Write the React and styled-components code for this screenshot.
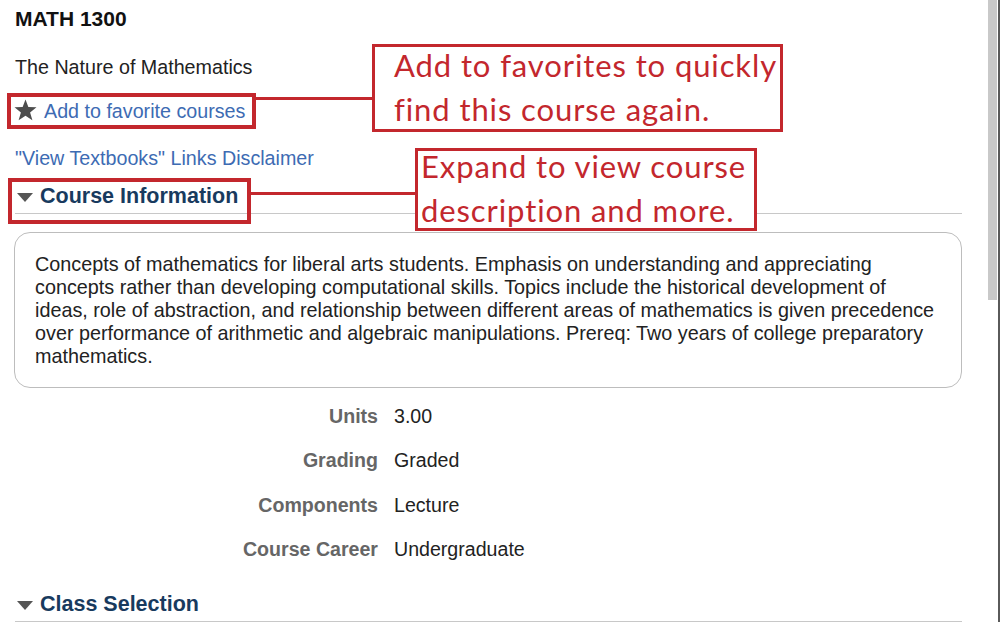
import React from 'react'
import styled, { createGlobalStyle } from 'styled-components';

const GlobalStyle = createGlobalStyle`
  html, body {
    margin: 0;
    padding: 0;
    background: #fff;
  }
  body {
    font-family: "Liberation Sans", Arial, sans-serif;
    color: #222;
  }
`

const RED = '#c3272d';

const fields = [
  { label: 'Units', value: '3.00' },
  { label: 'Grading', value: 'Graded' },
  { label: 'Components', value: 'Lecture' },
  { label: 'Course Career', value: 'Undergraduate' },
];

const Star = () => (
  <svg width="23" height="22" viewBox="0 0 24 23">
    <polygon
      points="12,0.5 15,8.4 23.5,8.7 16.8,14 19.2,22.3 12,17.5 4.8,22.3 7.2,14 0.5,8.7 9,8.4"
      fill="#4d4d4d"
    />
  </svg>
);

const Caret = () => (
  <svg width="16" height="9" viewBox="0 0 16 9">
    <polygon points="0,0 16,0 8,9" fill="#555" />
  </svg>
);

const App = () => {
  return (
    <>
      <GlobalStyle />
      <Screen>
        <Page>
          <Title>MATH 1300</Title>
          <Subtitle>The Nature of Mathematics</Subtitle>
          <FavLink href="#">
            <Star />
            <span>Add to favorite courses</span>
          </FavLink>
          <Link href="#">"View Textbooks" Links Disclaimer</Link>

          <SectionHeader $top={13}>
            <Caret />
            Course Information
          </SectionHeader>
          <Description>
            Concepts of mathematics for liberal arts students. Emphasis on understanding and appreciating<br />
            concepts rather than developing computational skills. Topics include the historical development of<br />
            ideas, role of abstraction, and relationship between different areas of mathematics is given precedence<br />
            over performance of arithmetic and algebraic manipulations. Prereq: Two years of college preparatory<br />
            mathematics.
          </Description>

          <Fields>
            {fields.map(f => (
              <React.Fragment key={f.label}>
                <Label>{f.label}</Label>
                <Value>{f.value}</Value>
              </React.Fragment>
            ))}
          </Fields>

          <SectionHeader $top={19}>
            <Caret />
            Class Selection
          </SectionHeader>

          {/* annotation markup drawn over the page */}
          <Highlight style={{ left: 7, top: 93, width: 249, height: 36 }} />
          <Connector style={{ left: 256, top: 97, width: 116 }} />
          <Callout $pad={19} $shift={-4} style={{ left: 372, top: 44, width: 411, height: 88 }}>
            <span>Add to favorites to quickly<br />find this course again.</span>
          </Callout>

          <Highlight style={{ left: 8, top: 178, width: 243, height: 46 }} />
          <Connector style={{ left: 251, top: 192, width: 164 }} />
          <Callout $pad={3} $shift={-7} style={{ left: 415, top: 148, width: 342, height: 83 }}>
            <span>Expand to view course<br />description and more.</span>
          </Callout>
        </Page>
        <Scrollbar>
          <Thumb />
        </Scrollbar>
      </Screen>
    </>
  );
}

const Screen = styled.div`
  display: flex;
  width: 1000px;
  height: 622px;
  overflow: hidden;
`

const Page = styled.main`
  position: relative;
  flex: 1;
  min-width: 0;
  padding: 7px 26px 0 15px;
`

const Scrollbar = styled.div`
  flex: 0 0 12px;
  border-right: 2px solid #5a5a5a;
  box-sizing: border-box;
  background: #fff;
`

const Thumb = styled.div`
  width: 9px;
  height: 300px;
  background: #c9c9c9;
`

const Title = styled.h1`
  margin: 0;
  font-size: 21px;
  line-height: 24px;
  font-weight: 700;
  color: #111;
`

const Subtitle = styled.div`
  margin-top: 24px;
  font-size: 19.7px;
  line-height: 24px;
  color: #222;
`

const Link = styled.a`
  display: block;
  width: fit-content;
  margin-top: 23px;
  font-size: 19.7px;
  line-height: 24px;
  color: #3d6bb3;
  text-decoration: none;
`

const FavLink = styled(Link)`
  display: flex;
  align-items: center;
  gap: 7px;
  margin-top: 20px;
  margin-left: -1px;

  svg {
    margin-top: -2px;
  }
`

const SectionHeader = styled.h2`
  display: flex;
  align-items: center;
  gap: 7px;
  margin: ${p => p.$top}px 0 0;
  padding: 0 0 4px 2px;
  border-bottom: 1px solid #c8c8c8;
  font-size: 21.5px;
  line-height: 26px;
  font-weight: 700;
  color: #183a5e;

  svg {
    margin-top: 2px;
  }
`

const Description = styled.p`
  margin: 18px 0 0 -1px;
  padding: 20px 10px 19px 20px;
  border: 1px solid #bdbdbd;
  border-radius: 16px;
  font-size: 19.8px;
  line-height: 23px;
  color: #222;
  white-space: nowrap;
  overflow: hidden;
`

const Fields = styled.div`
  display: grid;
  grid-template-columns: 363px auto;
  column-gap: 16px;
  grid-auto-rows: 44.5px;
  align-items: center;
  margin-top: 6px;
  font-size: 19.6px;
`

const Label = styled.div`
  text-align: right;
  font-weight: 700;
  color: #666;
`

const Value = styled.div`
  color: #222;
`

const Highlight = styled.div`
  position: absolute;
  box-sizing: border-box;
  border: 4px solid ${RED};
  pointer-events: none;
`

const Connector = styled.div`
  position: absolute;
  height: 3px;
  background: ${RED};
`

const Callout = styled.div`
  position: absolute;
  box-sizing: border-box;
  border: 3px solid ${RED};
  padding: 0 0 0 ${p => p.$pad}px;
  background: #fff;
  font-family: Lato, "Open Sans", sans-serif;
  font-size: 31px;
  letter-spacing: 0.9px;
  line-height: 44px;
  color: ${RED};
  white-space: nowrap;

  span {
    display: block;
    margin-top: ${p => p.$shift}px;
  }
`

export default App
